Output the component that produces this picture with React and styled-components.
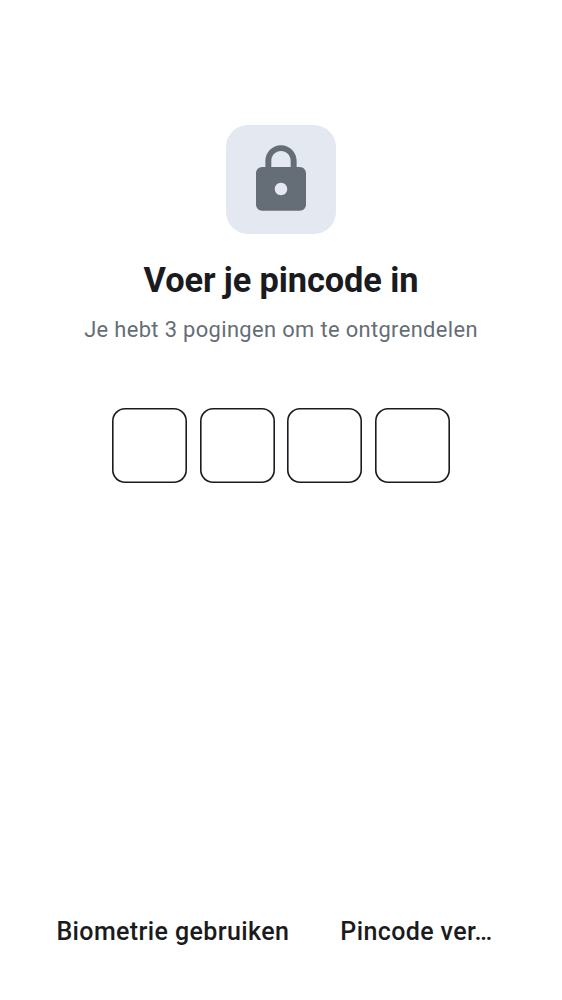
import React from "react";
import styled, { createGlobalStyle } from "styled-components";

const GlobalStyle = createGlobalStyle`
  * { box-sizing: border-box; }
  body { margin: 0; background: #fff; font-family: Roboto, sans-serif; }
`;

const Screen = styled.main`
  width: 562px;
  height: 1000px;
  padding-top: 125px;
  display: flex;
  flex-direction: column;
  align-items: center;
  background: #fff;
  overflow: hidden;
`;

const LockTile = styled.div`
  width: 110px;
  height: 109px;
  border-radius: 22px;
  background: #e3e8f1;
  display: flex;
  justify-content: center;
  padding-top: 17px;
`;

const LockIcon = styled.svg`
  width: 75px;
  height: 75px;
  margin-right: 1px;
  fill: #656d76;
`;

const Title = styled.h1`
  margin: 26px 0 0;
  font-size: 34.375px;
  line-height: 40px;
  font-weight: 700;
  letter-spacing: -0.1px;
  color: #1a1b21;
  white-space: nowrap;
`;

const Subtitle = styled.p`
  margin: 14px 0 0;
  font-size: 21.875px;
  line-height: 31px;
  letter-spacing: 0.37px;
  color: #656d76;
  white-space: nowrap;
`;

const PinRow = styled.div`
  margin-top: 63px;
  display: flex;
  gap: 12.5px;
`;

const PinBox = styled.div`
  width: 75px;
  height: 75px;
  box-shadow: inset 0 0 0 1.6px #1a1b21;
  border-radius: 13px;
`;

const Actions = styled.footer`
  margin-top: auto;
  width: 100%;
  padding: 0 56px 52px 56.4px;
  display: flex;
  gap: 51px;
`;

const Action = styled.button`
  border: 0;
  padding: 0;
  background: none;
  font-family: inherit;
  font-size: 25px;
  line-height: 32px;
  font-weight: 500;
  letter-spacing: 0.39px;
  color: #1a1b21;
  white-space: nowrap;
`;

export default function App() {
  return (
    <>
      <GlobalStyle />
      <Screen>
        <LockTile>
          <LockIcon viewBox="-0.16 0 24 24" aria-hidden="true">
            <path d="M18 8h-1V6c0-2.76-2.24-5-5-5S7 3.24 7 6v2H6c-1.1 0-2 .9-2 2v10c0 1.1.9 2 2 2h12c1.1 0 2-.9 2-2V10c0-1.1-.9-2-2-2zm-6 9c-1.1 0-2-.9-2-2s.9-2 2-2 2 .9 2 2-.9 2-2 2zm3.1-9H8.9V6c0-1.71 1.39-3.1 3.1-3.1 1.71 0 3.1 1.39 3.1 3.1v2z" />
          </LockIcon>
        </LockTile>
        <Title>Voer je pincode in</Title>
        <Subtitle>Je hebt 3 pogingen om te ontgrendelen</Subtitle>
        <PinRow>
          {[0, 1, 2, 3].map((n) => (
            <PinBox key={n} />
          ))}
        </PinRow>
        <Actions>
          <Action>Biometrie gebruiken</Action>
          <Action>Pincode ver…</Action>
        </Actions>
      </Screen>
    </>
  );
}
